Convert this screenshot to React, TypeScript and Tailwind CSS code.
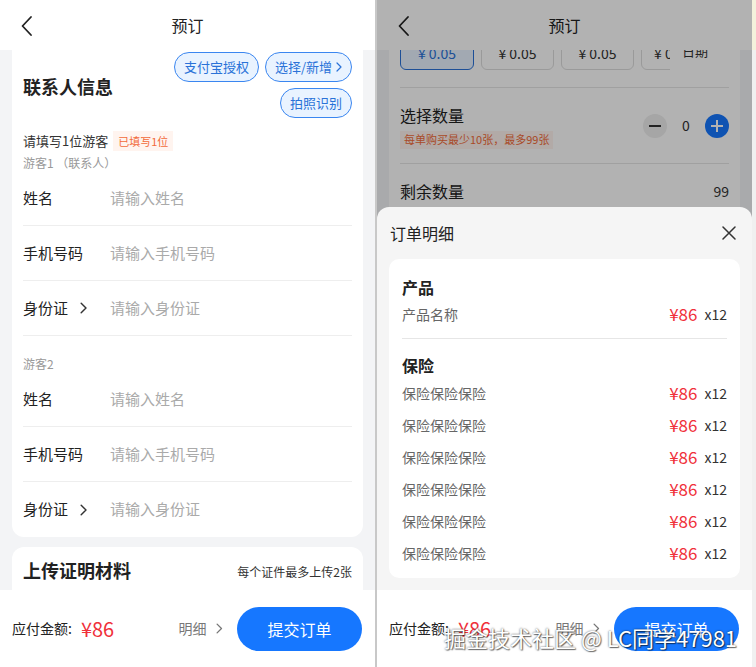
import React from 'react';

const font = "font-['Noto_Sans_CJK_SC','Noto_Sans',sans-serif]";

function BackIcon() {
    return (
        <svg width="14" height="22" viewBox="0 0 14 22" fill="none">
            <path d="M11 2 L2.5 11 L11 20" stroke="#222" strokeWidth="1.8" strokeLinecap="round" strokeLinejoin="round" />
        </svg>
    );
}

function Chevron({ color = '#333', size = 12 }: { color?: string; size?: number }) {
    return (
        <svg width={size * 0.6} height={size} viewBox="0 0 6 10" fill="none">
            <path d="M1 1 L5 5 L1 9" stroke={color} strokeWidth="1.2" strokeLinecap="round" strokeLinejoin="round" />
        </svg>
    );
}

function Header() {
    return (
        <div className="relative h-[50px] bg-white flex items-center justify-center shrink-0 z-10">
            <div className="absolute left-[20px] top-[15px]">
                <BackIcon />
            </div>
            <span className="text-[16px] text-[#222]">预订</span>
        </div>
    );
}

function Footer() {
    return (
        <div className="h-[77px] bg-white flex items-center pl-[12px] pr-[13px] shrink-0">
            <span className="text-[14px] text-[#222]">应付金额:</span>
            <span className="ml-[9px] text-[20px] text-[#f0303a]">¥86</span>
            <div className="ml-auto flex items-center gap-[10px] text-[14px] text-[#777]">
                <span>明细</span>
                <Chevron color="#777" size={11} />
            </div>
            <button className="ml-[14px] w-[125px] h-[44px] rounded-full bg-[#1677ff] text-white text-[16px]">
                提交订单
            </button>
        </div>
    );
}

function FieldRow({ label, placeholder, arrow, last }: { label: string; placeholder: string; arrow?: boolean; last?: boolean }) {
    return (
        <div className={`h-[55px] flex items-center ${last ? '' : 'border-b border-[#eeeeee]'}`}>
            <div className="w-[87px] flex items-center gap-[12px] text-[15px] text-[#222]">
                <span>{label}</span>
                {arrow && <Chevron color="#333" size={12} />}
            </div>
            <span className="text-[15px] text-[#aaaaaa]">{placeholder}</span>
        </div>
    );
}

function PillButton({ children }: { children: React.ReactNode }) {
    return (
        <button className="h-[30px] px-[9px] rounded-full border border-[#3a86f0] bg-[#e9f3ff] text-[13px] text-[#2a72d8] flex items-center gap-[4px]">
            {children}
        </button>
    );
}

function LeftPhone() {
    return (
        <div className={`w-[375px] h-[667px] flex flex-col bg-[#f3f4f6] ${font}`}>
            <Header />
            <div className="flex-1 overflow-hidden px-[12px] flex flex-col gap-[10px]">
                <div className="bg-white rounded-b-[12px] px-[11px] pt-[2px]">
                    <div className="flex items-center justify-between">
                        <span className="text-[18px] font-bold text-[#222] mt-[2px]">联系人信息</span>
                        <div className="flex flex-col items-end gap-[6px]">
                            <div className="flex gap-[6px]">
                                <PillButton>支付宝授权</PillButton>
                                <PillButton>
                                    选择/新增
                                    <Chevron color="#2a72d8" size={10} />
                                </PillButton>
                            </div>
                            <PillButton>拍照识别</PillButton>
                        </div>
                    </div>
                    <div className="mt-[13px] flex items-center h-[20px]">
                        <span className="text-[13px] text-[#333]">请填写1位游客</span>
                        <span className="ml-[5px] px-[5px] h-[20px] flex items-center bg-[#fff4ef] text-[11px] text-[#f26b3a]">已填写1位</span>
                    </div>
                    <div className="mt-[4px] text-[12px] leading-[16px] text-[#999]">游客1 （联系人）</div>
                    <FieldRow label="姓名" placeholder="请输入姓名" />
                    <FieldRow label="手机号码" placeholder="请输入手机号码" />
                    <FieldRow label="身份证" placeholder="请输入身份证" arrow />
                    <div className="mt-[20px] text-[12px] leading-[16px] text-[#999]">游客2</div>
                    <FieldRow label="姓名" placeholder="请输入姓名" />
                    <FieldRow label="手机号码" placeholder="请输入手机号码" />
                    <FieldRow label="身份证" placeholder="请输入身份证" arrow last />
                </div>
                <div className="bg-white rounded-t-[12px] px-[11px] h-[60px] flex items-start pt-[10px] justify-between">
                    <span className="text-[18px] font-bold text-[#222]">上传证明材料</span>
                    <span className="text-[12px] text-[#333] mt-[6px]">每个证件最多上传2张</span>
                </div>
            </div>
            <Footer />
        </div>
    );
}

function PriceRow({ name }: { name: string }) {
    return (
        <div className="h-[32px] flex items-center">
            <span className="text-[14px] text-[#666]">{name}</span>
            <span className="ml-auto text-[17px] text-[#f0303a]">¥86</span>
            <span className="ml-[7px] text-[14px] text-[#333]">x12</span>
        </div>
    );
}

function RightPhone() {
    return (
        <div className={`relative w-[375px] h-[667px] flex flex-col bg-[#f3f4f6] overflow-hidden ${font}`}>
            <Header />
            <div className="flex-1 overflow-hidden px-[12px]">
                <div className="bg-white px-[11px]">
                    <div className="h-[20px] flex items-end">
                        <div className="w-[270px] h-[20px] overflow-hidden flex items-end gap-[7px] shrink-0">
                            <div className="w-[74px] h-[36px] shrink-0 rounded-[6px] border border-[#2a72d8] bg-[#e9f3ff] flex items-start justify-center pt-[8px] text-[14px] text-[#2a72d8]">¥ 0.05</div>
                            <div className="w-[73px] h-[36px] shrink-0 rounded-[6px] border border-[#dddddd] flex items-start justify-center pt-[8px] text-[14px] text-[#333]">¥ 0.05</div>
                            <div className="w-[73px] h-[36px] shrink-0 rounded-[6px] border border-[#dddddd] flex items-start justify-center pt-[8px] text-[14px] text-[#333]">¥ 0.05</div>
                            <div className="w-[73px] h-[36px] shrink-0 rounded-[6px] border border-[#dddddd] flex items-start justify-start pl-[12px] pt-[8px] text-[14px] text-[#333]">¥ 0.05</div>
                        </div>
                        <span className="ml-[12px] mb-[13px] text-[13px] text-[#333] leading-none">日期</span>
                    </div>
                    <div className="mt-[17px] border-t border-[#e6e6e6]" />
                    <div className="h-[76px] flex items-center border-b border-[#e6e6e6]">
                        <div className="flex flex-col gap-[4px]">
                            <span className="text-[16px] text-[#222]">选择数量</span>
                            <span className="px-[4px] h-[18px] flex items-center bg-[#fff4ef] text-[11px] text-[#f26b3a]">每单购买最少10张，最多99张</span>
                        </div>
                        <div className="ml-auto flex items-center">
                            <div className="w-[24px] h-[24px] rounded-full bg-[#eeeeee] flex items-center justify-center">
                                <div className="w-[12px] h-[2px] bg-[#333]" />
                            </div>
                            <span className="w-[38px] text-center text-[14px] text-[#333]">0</span>
                            <div className="w-[24px] h-[24px] rounded-full bg-[#1677ff] flex items-center justify-center relative">
                                <div className="w-[12px] h-[2px] bg-white" />
                                <div className="absolute w-[2px] h-[12px] bg-white" />
                            </div>
                        </div>
                    </div>
                    <div className="h-[54px] flex items-center">
                        <span className="text-[16px] text-[#222]">剩余数量</span>
                        <span className="ml-auto text-[14px] text-[#333]">99</span>
                    </div>
                </div>
            </div>
            <div className="h-[77px]" />

            <div className="absolute inset-0 bg-black/30 z-20" />

            <div className="absolute left-0 right-0 top-[207px] bottom-0 bg-[#f5f5f5] rounded-t-[12px] flex flex-col z-30">
                <div className="h-[52px] flex items-center px-[13px] shrink-0">
                    <span className="text-[16px] text-[#222]">订单明细</span>
                    <svg className="ml-auto mr-[3px]" width="14" height="14" viewBox="0 0 14 14" fill="none">
                        <path d="M1 1 L13 13 M13 1 L1 13" stroke="#333" strokeWidth="1.5" strokeLinecap="round" />
                    </svg>
                </div>
                <div className="mx-[12px] bg-white rounded-[10px] px-[13px] pt-[17px] pb-[9px]">
                    <div className="text-[16px] font-bold text-[#222] leading-[22px]">产品</div>
                    <PriceRow name="产品名称" />
                    <div className="mt-[8px] border-t border-[#e6e6e6]" />
                    <div className="mt-[14px] text-[16px] font-bold text-[#222] leading-[24px]">保险</div>
                    <PriceRow name="保险保险保险" />
                    <PriceRow name="保险保险保险" />
                    <PriceRow name="保险保险保险" />
                    <PriceRow name="保险保险保险" />
                    <PriceRow name="保险保险保险" />
                    <PriceRow name="保险保险保险" />
                </div>
                <div className="mt-auto">
                    <Footer />
                </div>
            </div>

            <div className="absolute left-[67px] top-[621px] z-40 text-[22px] text-white [text-shadow:0_0_2px_rgba(0,0,0,0.7),1px_1px_1px_rgba(0,0,0,0.5)]">
                掘金技术社区 @ LC同学47981
            </div>
        </div>
    );
}

export default function App() {
    return (
        <div className="w-[756px] h-[667px] flex bg-white overflow-hidden">
            <LeftPhone />
            <div className="w-[2px] h-full bg-[#c8c8c8]" />
            <RightPhone />
            <div className="flex-1 flex flex-col">
                <div className="h-[50px] bg-[#f4f2dc]" />
                <div className="flex-1 bg-[#f0f0f0]" />
            </div>
        </div>
    );
}
